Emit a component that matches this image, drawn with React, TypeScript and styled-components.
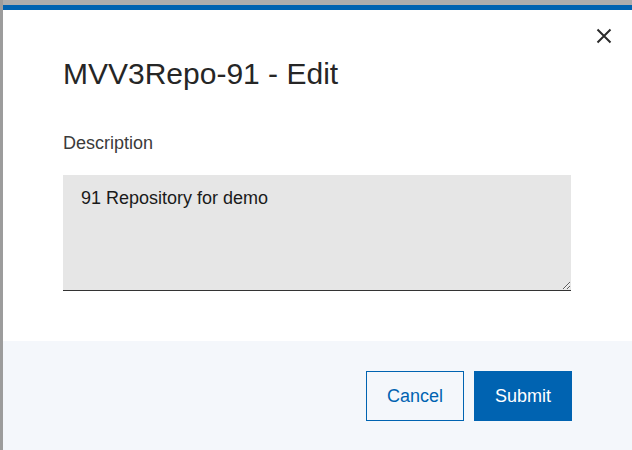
import React from "react";
import styled, { createGlobalStyle } from "styled-components";

const Global = createGlobalStyle`
  html, body { margin: 0; padding: 0; }
  body {
    width: 632px;
    height: 450px;
    overflow: hidden;
    background: #a9a9a9;
    font-family: "Liberation Sans", Arial, sans-serif;
  }
  #root { height: 100%; }
`;

const Backdrop = styled.div`
  height: 100%;
  padding: 5px 0 0 3px;
  box-sizing: border-box;
  background: linear-gradient(to right, #9c9c9c 0, #9c9c9c 3px, #adadad 3px);
`;

const Dialog = styled.div`
  position: relative;
  width: 640px;
  height: 445px;
  box-sizing: border-box;
  background: #ffffff;
  border-top: 5px solid #0063b1;
  display: flex;
  flex-direction: column;
`;

const CloseButton = styled.button`
  position: absolute;
  top: 14px;
  right: 27px;
  width: 24px;
  height: 24px;
  padding: 0;
  border: none;
  background: transparent;
  display: flex;
  align-items: center;
  justify-content: center;
  cursor: pointer;
`;

const Body = styled.div`
  padding: 47px 0 0 60px;
  display: flex;
  flex-direction: column;
`;

const Title = styled.h2`
  margin: 0;
  font-size: 30px;
  font-weight: 400;
  line-height: normal;
  color: #262626;
`;

const Label = styled.label`
  margin-top: 42px;
  font-size: 18px;
  line-height: normal;
  color: #3b3b3b;
`;

const TextArea = styled.textarea`
  margin-top: 21px;
  width: 508px;
  height: 116px;
  box-sizing: border-box;
  padding: 13px 18px;
  border: none;
  border-bottom: 1px solid #333333;
  border-radius: 0;
  background: #e6e6e6;
  font-family: "Liberation Sans", Arial, sans-serif;
  font-size: 18px;
  line-height: 1.2;
  color: #1a1a1a;
  outline: none;
  resize: both;
`;

const Footer = styled.div`
  margin-top: 50px;
  flex: 1;
  background: #f4f7fb;
  padding: 30px 0 0 363px;
  display: flex;
  gap: 10px;
  align-items: flex-start;
`;

const Button = styled.button<{ $primary?: boolean }>`
  width: 98px;
  height: 50px;
  box-sizing: border-box;
  border: 1px solid #0063b1;
  background: ${(p) => (p.$primary ? "#0063b1" : "transparent")};
  color: ${(p) => (p.$primary ? "#ffffff" : "#0063b1")};
  font-family: "Liberation Sans", Arial, sans-serif;
  font-size: 18px;
  cursor: pointer;
  padding: 0;
`;

export default function App() {
  return (
    <>
      <Global />
      <Backdrop>
        <Dialog>
          <CloseButton aria-label="Close">
            <svg width="16" height="16" viewBox="0 0 16 16">
              <path
                d="M1.5 1.5 L14.5 14.5 M14.5 1.5 L1.5 14.5"
                stroke="#2b2b2b"
                strokeWidth="2"
                fill="none"
              />
            </svg>
          </CloseButton>
          <Body>
            <Title>MVV3Repo-91 - Edit</Title>
            <Label htmlFor="desc">Description</Label>
            <TextArea id="desc" defaultValue="91 Repository for demo" />
          </Body>
          <Footer>
            <Button>Cancel</Button>
            <Button $primary>Submit</Button>
          </Footer>
        </Dialog>
      </Backdrop>
    </>
  );
}
